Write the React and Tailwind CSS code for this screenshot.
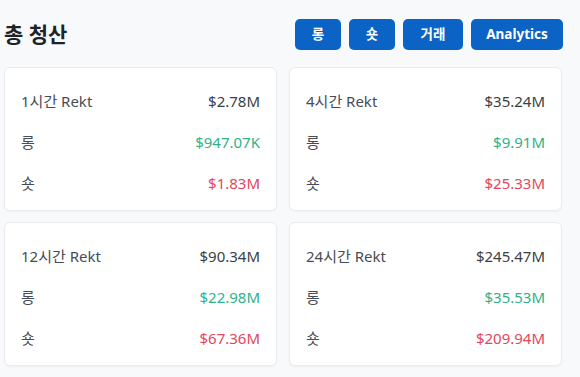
import React from 'react';

const cards = [
  { title: '1시간 Rekt', total: '$2.78M', long: '$947.07K', short: '$1.83M' },
  { title: '4시간 Rekt', total: '$35.24M', long: '$9.91M', short: '$25.33M' },
  { title: '12시간 Rekt', total: '$90.34M', long: '$22.98M', short: '$67.36M' },
  { title: '24시간 Rekt', total: '$245.47M', long: '$35.53M', short: '$209.94M' },
];

export default function App() {
  return (
    <div
      className="min-h-screen bg-[#f8f9fa] w-full"
      style={{ fontFamily: '"Noto Sans", "Noto Sans CJK KR", sans-serif' }}
    >
      <div className="w-[566px] px-1 pt-[19px]">
        {/* Header */}
        <header className="flex justify-between items-center mb-[17px] -mr-px">
          <h1 className="text-[21px] font-bold text-[#1e2329] leading-none">총 청산</h1>
          <div className="flex items-center gap-2">
            <NavButton label="롱" w="w-[46px]" />
            <NavButton label="숏" w="w-[46px]" />
            <NavButton label="거래" w="w-[60px]" />
            <NavButton label="Analytics" w="w-[92px]" />
          </div>
        </header>

        {/* Cards */}
        <section className="grid grid-cols-2 gap-x-3 gap-y-[11px]">
          {cards.map((c) => (
            <RektCard key={c.title} {...c} />
          ))}
        </section>
      </div>
    </div>
  );
}

function NavButton({ label, w }) {
  return (
    <button
      className={`${w} h-[31px] rounded-[5px] bg-[#0b63c5] text-white text-[13.5px] font-bold flex items-center justify-center`}
    >
      {label}
    </button>
  );
}

function RektCard({ title, total, long, short }) {
  return (
    <div className="h-[144px] bg-white rounded-md border border-[#eaecef] shadow-[0_1px_2px_rgba(0,0,0,0.04)] px-4 pt-[13px]">
      <Row label={title} value={total} color="text-[#3a3f45]" />
      <Row label="롱" value={long} color="text-[#2fb18a]" />
      <Row label="숏" value={short} color="text-[#e2475c]" />
    </div>
  );
}

function Row({ label, value, color }) {
  return (
    <div className="h-[41px] flex items-center justify-between text-[15px]">
      <span className="text-[#474d57]">{label}</span>
      <span className={color}>{value}</span>
    </div>
  );
}
